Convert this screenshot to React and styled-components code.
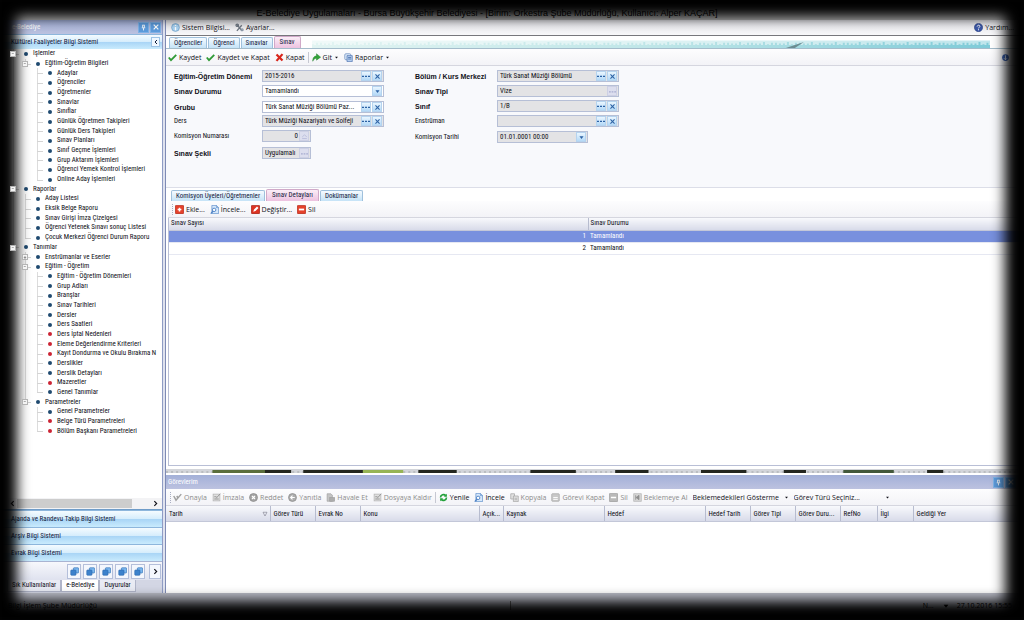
import React from "react"
import styled, { createGlobalStyle, css } from "styled-components"

const TREE = [
  { name: "İşlemler", items: [
    { name: "Eğitim-Öğretim Bilgileri", items: [
      "Adaylar", "Öğrenciler", "Öğretmenler", "Sınavlar", "Sınıflar",
      "Günlük Öğretmen Takipleri", "Günlük Ders Takipleri", "Sınav Planları",
      "Sınıf Geçme İşlemleri", "Grup Aktarım İşlemleri",
      "Öğrenci Yemek Kontrol İşlemleri", "Online Aday İşlemleri",
    ] },
  ] },
  { name: "Raporlar", items: [
    "Aday Listesi", "Eksik Belge Raporu", "Sınav Girişi İmza Çizelgesi",
    "Öğrenci Yetenek Sınavı sonuç Listesi", "Çocuk Merkezi Öğrenci Durum Raporu",
  ] },
  { name: "Tanımlar", items: [
    { name: "Enstrümanlar ve Eserler", closed: true },
    { name: "Eğitim - Öğretim", items: [
      "Eğitim - Öğretim Dönemleri", "Grup Adları", "Branşlar", "Sınav Tarihleri",
      "Dersler", "Ders Saatleri",
      { name: "Ders İptal Nedenleri", red: true },
      { name: "Eleme Değerlendirme Kriterleri", red: true },
      { name: "Kayıt Dondurma ve Okulu Bırakma N", red: true },
      "Derslikler", "Derslik Detayları",
      { name: "Mazeretler", red: true },
      "Genel Tanımlar",
    ] },
    { name: "Parametreler", items: [
      "Genel Parametreler",
      { name: "Belge Türü Parametreleri", red: true },
      { name: "Bölüm Başkanı Parametreleri", red: true },
    ] },
  ] },
]

// one flat list of rows, each knows which vertical rails run through it
function flatten(items, rails = []) {
  return items.flatMap((item, i) => {
    const node = typeof item === "string" ? { name: item } : item
    const last = i === items.length - 1
    return [
      { ...node, rails, last },
      ...flatten(node.items || [], [...rails, !last]),
    ]
  })
}

const TASK_COLUMNS = [
  ["Tarih", 104], ["Görev Türü", 45], ["Evrak No", 45], ["Konu", 119], ["Açık...", 24],
  ["Kaynak", 101], ["Hedef", 101], ["Hedef Tarih", 45], ["Görev Tipi", 45],
  ["Görev Duru...", 45], ["RefNo", 37], ["İlgi", 36], ["Geldiği Yer", null],
]

const icons = {
  check: <path d="M1 6 L4 9.5 L11 2.5" fill="none" stroke="#2f9a35" strokeWidth="2.4" />,
  cross: <path d="M2 2 L10 10 M10 1.5 L2 10.5" stroke="#d8261c" strokeWidth="3" />,
  go: <path d="M1 11 C1 6 3 4 6 4 V1 L11.5 5.5 L6 9.5 V7 C4 7 2.5 8 1 11Z" fill="#35a53a" stroke="#1f7a2a" strokeWidth=".6" />,
  report: <g><rect x="1" y="1" width="8" height="8" rx="1.5" fill="#dce9f8" stroke="#6f8fc0" /><path d="M4 3.5h7v8H4z" fill="#b4cdee" stroke="#5478b4" /><path d="M5.5 6h4M5.5 8h4" stroke="#4168a6" /></g>,
  info: <g><circle cx="6" cy="6" r="5.2" fill="#a9d3f2" stroke="#5f93bd" strokeWidth=".8" /><path d="M6 5.2V9.5M6 2.6v1.5" stroke="#fff" strokeWidth="1.8" /></g>,
  tools: <g fill="none" stroke="#6d7682" strokeWidth="1.7"><path d="M2.5 10.5L9 3M3 3l6.5 7.5" /><circle cx="3" cy="3" r="1.6" /><circle cx="9.5" cy="9" r="1.3" stroke="#8b98a8" /></g>,
  help: <g><circle cx="6" cy="6" r="5.5" fill="#3c58a8" stroke="#21377b" strokeWidth=".7" /><path d="M4.2 4.8C4.2 2.4 8 2.4 7.8 4.6C7.7 5.8 6 5.7 6 7.2M6 8.3v1.4" fill="none" stroke="#fff" strokeWidth="1.3" /></g>,
  plus: <g><rect x=".5" y=".5" width="11" height="11" rx="1" fill="#e5412b" stroke="#b32818" /><path d="M6 3.5v5M3.5 6h5" stroke="#fff" strokeWidth="2" /></g>,
  edit: <g><rect x=".5" y=".5" width="11" height="11" rx="1" fill="#dd3322" stroke="#a32216" /><path d="M3 9l1-3 4-4 2 2-4 4z" fill="#fff" /></g>,
  minus: <g><rect x=".5" y=".5" width="11" height="11" rx="1" fill="#e5412b" stroke="#b32818" /><path d="M2.5 6h7" stroke="#fff" strokeWidth="2.4" /></g>,
  view: <g><path d="M2.5 .5h6l3 3v8h-9z" fill="#d6e8fb" stroke="#6391cc" /><path d="M8.5 .5v3h3" fill="none" stroke="#6391cc" /><circle cx="5.5" cy="6.5" r="2.3" fill="#fff" stroke="#4a7fc4" strokeWidth="1.2" /><path d="M4 8.3L1 11.5" stroke="#4a7fc4" strokeWidth="1.6" /></g>,
  refresh: <g fill="none" stroke="#23a13a" strokeWidth="2.2"><path d="M2 6A4 4 0 0 1 9 3.5M10 6A4 4 0 0 1 3 8.5" /><path d="M10.5 1v4h-4zM1.5 11V7h4z" fill="#23a13a" stroke="none" /></g>,
  approve: <path d="M1 4L4 9.5L11 1.5M5 4l2 3" fill="none" stroke="#a0a0a0" strokeWidth="2" />,
  sign: <g><rect x="1.5" y="1.5" width="9" height="9" fill="#e0e0e0" stroke="#b4b4b4" /><path d="M3 5h3M3 8h6M5.5 7L11 1" stroke="#969696" strokeWidth="1.3" /></g>,
  reject: <g><circle cx="6" cy="6" r="5.3" fill="#a4a4a4" stroke="#8a8a8a" /><path d="M4 4l4 4M8 4L4 8" stroke="#fff" strokeWidth="1.5" /></g>,
  reply: <g><circle cx="6" cy="6" r="5.3" fill="#adadad" stroke="#8c8c8c" /><path d="M9 6H3.5M6 3.5L3.5 6L6 8.5" fill="none" stroke="#fff" strokeWidth="1.5" /></g>,
  forward: <g fill="#c4c4c4" stroke="#9b9b9b" strokeWidth=".8"><path d="M1.5 1h5l2 2v8h-7z" /><rect x="5" y="6" width="6.5" height="5" fill="#adadad" /></g>,
  copy: <g fill="#e2e2e2" stroke="#a6a6a6"><path d="M1 1h5v7H1z" /><path d="M4.5 4h6.5v7.5H4.5z" /><path d="M6 7h3.5M6 9h3.5" /></g>,
  close: <g><rect x="1" y="1" width="10" height="10" rx="1" fill="#c9c9c9" stroke="#a7a7a7" /><path d="M3 6h6M3 8.5h6" stroke="#fff" strokeWidth="1.2" /></g>,
  dash: <g><rect x=".5" y=".5" width="11" height="11" rx="1" fill="#b9b9b9" stroke="#9d9d9d" /><path d="M2.5 6h7" stroke="#fff" strokeWidth="2" /></g>,
  hold: <g><rect x="1" y="1" width="10" height="10" fill="#d6d6d6" stroke="#b5b5b5" /><path d="M8 3L4 6l4 3zM3.5 3v6" fill="#8e8e8e" stroke="#8e8e8e" /></g>,
  stack: <g stroke="#2969ae" strokeWidth=".8"><rect x="4.5" y="1" width="7" height="7" rx="1" fill="#79b6ee" /><rect x="1" y="4" width="7" height="7" rx="1" fill="#3c82cc" /></g>,
  pin: <path d="M4 2h4M4.5 2v4M7.5 2v4M3 6.5h6M6 7v4" stroke="currentColor" fill="none" strokeWidth="1.5" />,
  x: <path d="M2.5 2.5L9.5 9.5M9.5 2.5L2.5 9.5" stroke="currentColor" strokeWidth="1.8" />,
  dots: <path d="M0 6.5h3M4.5 6.5h3M9 6.5h3" stroke="currentColor" strokeWidth="2" />,
  down: <path d="M2.5 4h7L6 8.5z" fill="currentColor" />,
  up: <path d="M2 7L6 3l4 4M2 9.5h8" fill="none" stroke="currentColor" />,
  left: <path d="M8 2L4 6l4 4" fill="none" stroke="currentColor" strokeWidth="2" />,
  right: <path d="M4 2l4 4-4 4" fill="none" stroke="currentColor" strokeWidth="2" />,
  sort: <path d="M2 2.5h8L6 10z" fill="none" stroke="#667" />,
  move: <g><circle cx="6" cy="6" r="4.5" fill="#3d64b4" /><path d="M6 3v6M4 7l2 2 2-2" fill="none" stroke="#fff" /></g>,
}

const Icon = ({ name, size = 9 }) => (
  <IconSvg viewBox="0 0 12 12" width={size} height={size} aria-hidden="true">{icons[name]}</IconSvg>
)

const Tool = ({ icon, caret, children, ...rest }) => (
  <ToolButton type="button" {...rest}>
    {icon && <Icon name={icon} />}
    {children}
    {caret && <Icon name="down" size={5} />}
  </ToolButton>
)

const Tabs = ({ label, names, active }) => (
  <TabList role="tablist" aria-label={label}>
    {names.map((name) => (
      <Tab key={name} type="button" role="tab" aria-selected={name === active} $active={name === active}>
        {name}
      </Tab>
    ))}
  </TabList>
)

const Lookup = ({ id, label, value, strong, white }) => (
  <>
    <FieldLabel htmlFor={id} $strong={strong}>{label}</FieldLabel>
    <FieldBox $white={white}>
      <FieldInput id={id} defaultValue={value} readOnly={!white} />
      <MiniButton type="button" aria-label={`${label} seç`}><Icon name="dots" size={8} /></MiniButton>
      <MiniButton type="button" aria-label={`${label} temizle`}><Icon name="x" size={7} /></MiniButton>
    </FieldBox>
  </>
)

const Choice = ({ id, label, value, strong, white, short }) => (
  <>
    <FieldLabel htmlFor={id} $strong={strong}>{label}</FieldLabel>
    <FieldBox $white={white} $short={short}>
      <FieldSelect id={id} disabled={!white}><option>{value}</option></FieldSelect>
      <MiniMark $off={!white}><Icon name={white ? "down" : "dots"} size={7} /></MiniMark>
    </FieldBox>
  </>
)

const Sidebar = () => (
  <Side>
    <PanelTitle>
      <PanelName $indent>e-Belediye</PanelName>
      <PanelButton type="button" aria-label="Sabitle"><Icon name="pin" size={7} /></PanelButton>
      <PanelButton type="button" aria-label="Paneli kapat"><Icon name="x" size={8} /></PanelButton>
    </PanelTitle>
    <Section type="button" $open>
      Kültürel Faaliyetler Bilgi Sistemi
      <Collapse><Icon name="left" size={6} /></Collapse>
    </Section>
    <TreeArea>
      <Tree role="tree">
        {flatten(TREE).map((row) => (
          <TreeRow key={row.name} role="treeitem" aria-level={row.rails.length + 1}>
            {row.rails.map((on, i) => <Rail key={i} $kind={on ? "line" : "none"} />)}
            <Rail $kind={row.last ? "last" : "branch"}>
              {(row.items || row.closed) && <Expander>{row.closed ? "+" : "−"}</Expander>}
            </Rail>
            <BulletCell><Bullet $red={row.red} /></BulletCell>
            {row.name}
          </TreeRow>
        ))}
      </Tree>
      <HScroll>
        <Icon name="left" size={7} />
        <Thumb />
        <Icon name="right" size={7} />
      </HScroll>
    </TreeArea>
    <Section type="button">Ajanda ve Randevu Takip Bilgi Sistemi</Section>
    <Section type="button">Arşiv Bilgi Sistemi</Section>
    <Section type="button">Evrak Bilgi Sistemi</Section>
    <Shortcuts>
      {[1, 2, 3, 4, 5].map((n) => (
        <Shortcut key={n} type="button" aria-label={`Kısayol ${n}`}><Icon name="stack" size={9} /></Shortcut>
      ))}
      <Shortcut type="button" aria-label="Diğer" $narrow><Icon name="right" size={7} /></Shortcut>
    </Shortcuts>
    <SideTabs role="tablist">
      <SideTab type="button" role="tab">Sık Kullanılanlar</SideTab>
      <SideTab type="button" role="tab" $active>e-Belediye</SideTab>
      <SideTab type="button" role="tab">Duyurular</SideTab>
    </SideTabs>
  </Side>
)

// faint skyline behind the document tabs
const Skyline = () => {
  const bars = Array.from({ length: 170 }, (_, i) => ({ x: i * 4, h: 5 + ((i * 7) % 3) + ((i * 13) % 2) }))
  return (
    <SkylineSvg viewBox="0 0 680 12" preserveAspectRatio="none" aria-hidden="true">
      <defs>
        <linearGradient id="sea" x1="0" x2="680" gradientUnits="userSpaceOnUse">
          <stop offset="0" stopColor="#e2f4f2" />
          <stop offset=".5" stopColor="#bfe6e8" />
          <stop offset="1" stopColor="#7fcbd8" />
        </linearGradient>
      </defs>
      <rect y="2" width="680" height="10" fill="url(#sea)" opacity=".5" />
      {bars.map((b) => <rect key={b.x} x={b.x} y={12 - b.h} width="2" height={b.h} fill="url(#sea)" />)}
      <rect y="8" width="680" height="4" fill="url(#sea)" />
      <path d="M475 12L493 4L484 12z" fill="#6c8d92" />
    </SkylineSvg>
  )
}

const Landscape = () => (
  <LandscapeSvg viewBox="0 0 850 4" preserveAspectRatio="none" aria-hidden="true">
    <rect width="850" height="4" fill="#d3d5da" />
    <path d="M0 3H850" stroke="#a2a5a6" strokeDasharray="2 3" />
    <path d="M46 1h55v3H46z" fill="#5a6e3c" />
    <path d="M98 1h26v3H98zM136 1h60v3h-60zM250 1h38v3h-38zM361 1h45v3h-45zM445 1h33v3h-33zM530 1h45v3h-45zM612 1h22v3h-22zM754 1h16v3h-16z" fill="#23261f" />
    <path d="M195 1h40v3h-40z" fill="#96b455" />
    <path d="M671 1h50v3h-50z" fill="#42583a" />
  </LandscapeSvg>
)

const ExamForm = () => (
  <Form>
    <FormColumn $labels={88} $rows="15px 16px 14px 15px 17px 12px">
      <Lookup id="donem" label="Eğitim-Öğretim Dönemi" value="2015-2016" strong />
      <Choice id="durum" label="Sınav Durumu" value="Tamamlandı" strong white />
      <Lookup id="grup" label="Grubu" value="Türk Sanat Müziği Bölümü Paz..." strong white />
      <Lookup id="ders" label="Ders" value="Türk Müziği Nazariyatı ve Solfeji" />
      <FieldLabel htmlFor="numara">Komisyon Numarası</FieldLabel>
      <FieldBox $short>
        <FieldInput id="numara" defaultValue="0" readOnly $right />
        <MiniMark $off><Icon name="up" size={7} /></MiniMark>
      </FieldBox>
      <Choice id="sekil" label="Sınav Şekli" value="Uygulamalı" strong short />
    </FormColumn>
    <FormColumn $labels={82} $rows="15px 15px 15px 16px 12px">
      <Lookup id="bolum" label="Bölüm / Kurs Merkezi" value="Türk Sanat Müziği Bölümü" strong />
      <Choice id="tip" label="Sınav Tipi" value="Vize" strong />
      <Lookup id="sinif" label="Sınıf" value="1/B" strong />
      <Lookup id="enstruman" label="Enstrüman" value="" />
      <FieldLabel htmlFor="tarih">Komisyon Tarihi</FieldLabel>
      <FieldBox $date>
        <FieldInput id="tarih" defaultValue="01.01.0001 00:00" readOnly />
        <MiniButton type="button" aria-label="Takvim"><Icon name="down" size={7} /></MiniButton>
      </FieldBox>
    </FormColumn>
  </Form>
)

const App = () => (
  <Window>
    <GlobalStyle />
    <TitleBar>
      E-Belediye Uygulamaları - Bursa Büyükşehir Belediyesi - [Birim: Orkestra Şube Müdürlüğü, Kullanıcı: Alper KAÇAR]
    </TitleBar>
    <Body>
      <Sidebar />
      <Main>
        <MenuBar>
          <Tool icon="info">Sistem Bilgisi...</Tool>
          <Tool icon="tools">Ayarlar...</Tool>
          <Spacer />
          <Tool icon="help">Yardım...</Tool>
        </MenuBar>
        <DocTabs>
          <Tabs label="Belgeler" names={["Öğrenciler", "Öğrenci", "Sınavlar", "Sınav"]} active="Sınav" />
          <Skyline />
        </DocTabs>
        <Toolbar>
          <Tool icon="check">Kaydet</Tool>
          <Tool icon="check">Kaydet ve Kapat</Tool>
          <Tool icon="cross">Kapat</Tool>
          <Divider />
          <Tool icon="go" caret>Git</Tool>
          <Tool icon="report" caret>Raporlar</Tool>
          <Spacer />
          <Tool icon="move" aria-label="Taşı" />
        </Toolbar>
        <ExamForm />
        <Details>
          <Tabs label="Detaylar" names={["Komisyon Üyeleri/Öğretmenler", "Sınav Detayları", "Dokümanlar"]} active="Sınav Detayları" />
          <Toolbar $grip>
            <Tool icon="plus">Ekle...</Tool>
            <Tool icon="view">İncele...</Tool>
            <Tool icon="edit">Değiştir...</Tool>
            <Tool icon="minus">Sil</Tool>
          </Toolbar>
          <GridFrame>
            <Table>
              <colgroup><col width="419" /><col /></colgroup>
              <thead><tr><Th>Sınav Sayısı</Th><Th>Sınav Durumu</Th></tr></thead>
              <tbody>
                <Tr $selected><Td $right>1</Td><Td>Tamamlandı</Td></Tr>
                <Tr><Td $right>2</Td><Td>Tamamlandı</Td></Tr>
              </tbody>
            </Table>
          </GridFrame>
        </Details>
        <Landscape />
        <Tasks>
          <PanelTitle>
            <PanelName>Görevlerim</PanelName>
            <PanelButton type="button" aria-label="Sabitle"><Icon name="pin" size={7} /></PanelButton>
            <PanelButton type="button" aria-label="Kapat"><Icon name="x" size={8} /></PanelButton>
            <EdgeGap />
          </PanelTitle>
          <Toolbar $grip>
            <Tool icon="approve" disabled>Onayla</Tool>
            <Tool icon="sign" disabled>İmzala</Tool>
            <Tool icon="reject" disabled>Reddet</Tool>
            <Tool icon="reply" disabled>Yanıtla</Tool>
            <Tool icon="forward" disabled>Havale Et</Tool>
            <Tool icon="sign" disabled>Dosyaya Kaldır</Tool>
            <Divider />
            <Tool icon="refresh">Yenile</Tool>
            <Tool icon="view">İncele</Tool>
            <Tool icon="copy" disabled>Kopyala</Tool>
            <Tool icon="close" disabled>Görevi Kapat</Tool>
            <Tool icon="dash" disabled>Sil</Tool>
            <Tool icon="hold" disabled>Beklemeye Al</Tool>
            <Filter $width={96}>
              <FilterSelect aria-label="Bekleyenler"><option>Beklemedekileri Gösterme</option></FilterSelect>
              <Icon name="down" size={5} />
            </Filter>
            <Filter $width={96}>
              <FilterSelect aria-label="Görev türü"><option>Görev Türü Seçiniz...</option></FilterSelect>
              <Icon name="down" size={5} />
            </Filter>
          </Toolbar>
          <Table>
            <colgroup>
              {TASK_COLUMNS.map(([name, width]) => <col key={name} width={width || undefined} />)}
            </colgroup>
            <thead>
              <tr>
                {TASK_COLUMNS.map(([name], i) => (
                  <Th key={name} $tall>{i === 0 ? <Sorted>{name}<Icon name="sort" size={6} /></Sorted> : name}</Th>
                ))}
              </tr>
            </thead>
          </Table>
        </Tasks>
      </Main>
    </Body>
    <StatusBar>
      <StatusText>Bilgi İşlem Şube Müdürlüğü</StatusText>
      <StatusText $divided>
        <StatusBox>N...<Icon name="down" size={8} /></StatusBox>
        <span>27.10.2016 15:55</span>
      </StatusText>
    </StatusBar>
    <Vignette />
  </Window>
)

export default App

const GlobalStyle = createGlobalStyle`
  * {
    box-sizing: border-box;
  }
  body {
    margin: 0;
    background: #000;
    color: #101018;
    font-family: "Roboto Condensed", "Liberation Sans", Arial, sans-serif;
    font-size: 7px;
    line-height: 9px;
    overflow: hidden;
  }
  button, input, select {
    font: inherit;
    color: inherit;
    margin: 0;
    padding: 0;
    border: 0;
    background: none;
  }
`;

const Window = styled.div`
  display: flex;
  flex-direction: column;
  height: 100vh;
  background: #dfe2ee;
`;

const Vignette = styled.div`
  position: fixed;
  inset: 0;
  pointer-events: none;
  box-shadow: inset -1px -1px 13px 18px #000;
`;

const TitleBar = styled.header`
  flex: none;
  height: 20px;
  padding: 7px 50px 0 0;
  text-align: center;
  font-family: "Liberation Sans", Arial, sans-serif;
  font-size: 9px;
  line-height: 12px;
  color: #000;
  background: #b5b5b5;
`;

const Body = styled.div`
  flex: 1;
  display: flex;
  min-height: 0;
`;

const IconSvg = styled.svg`
  flex: none;
  display: block;
`;

const Spacer = styled.div`
  flex: 1;
`;

const Side = styled.aside`
  flex: none;
  width: 163px;
  display: flex;
  flex-direction: column;
  background: #fff;
  border-right: 1px solid #8f9cc4;
`;

const PanelTitle = styled.div`
  flex: none;
  display: flex;
  align-items: center;
  gap: 1px;
  height: 14px;
  padding-right: 1px;
  color: #fff;
  background: linear-gradient(#a3b0d8, #bcc2e0);
`;

const PanelName = styled.span`
  flex: 1;
  padding-left: ${(props) => (props.$indent ? "12px" : "2px")};
`;

const EdgeGap = styled.span`
  width: 6px;
`;

const PanelButton = styled.button`
  display: grid;
  place-items: center;
  width: 11px;
  height: 11px;
  color: #fff;
  background: #5c9bdc;
  border: 1px solid #7fb2e6;
`;

const Section = styled.button`
  flex: none;
  display: flex;
  align-items: center;
  height: ${(props) => (props.$open ? "15px" : "17px")};
  padding-left: 11px;
  color: #12203c;
  white-space: nowrap;
  border-top: 1px solid #8db6dc;
  background: linear-gradient(#f4fbff 0%, #d6edfc 48%, #a9d5f6 52%, #c9ebfd 100%);
`;

const Collapse = styled.span`
  display: grid;
  place-items: center;
  width: 9px;
  height: 10px;
  margin-left: auto;
  margin-right: 2px;
  background: #eef7ff;
  border: 1px solid #9cc3e6;
`;

const TreeArea = styled.div`
  flex: 1;
  display: flex;
  flex-direction: column;
  justify-content: space-between;
  min-height: 0;
  border-bottom: 1px solid #6f9cc8;
`;

const Tree = styled.ul`
  display: grid;
  grid-auto-rows: 1fr;
  height: 387px;
  margin: 0;
  padding: 0 0 0 7px;
  list-style: none;
  overflow: hidden;
`;

const TreeRow = styled.li`
  display: flex;
  align-items: center;
  min-height: 0;
  white-space: nowrap;
`;

const Rail = styled.span`
  position: relative;
  flex: none;
  align-self: stretch;
  width: 12px;
  ${(props) => props.$kind !== "none" && css`
    &::before {
      content: "";
      position: absolute;
      left: 6px;
      top: 0;
      bottom: ${props.$kind === "last" ? "50%" : "0"};
      border-left: 1px solid #dcdcdc;
    }
  `}
  ${(props) => (props.$kind === "last" || props.$kind === "branch") && css`
    &::after {
      content: "";
      position: absolute;
      left: 6px;
      right: 0;
      top: 50%;
      border-top: 1px solid #d4d4d4;
    }
  `}
`;

const Expander = styled.span`
  position: absolute;
  z-index: 1;
  left: 3px;
  top: 2px;
  width: 6px;
  height: 6px;
  font-size: 6px;
  line-height: 4px;
  text-align: center;
  color: #555;
  background: #f4f4f4;
  border: 1px solid #b4b4b4;
`;

const BulletCell = styled.span`
  flex: none;
  display: grid;
  place-items: center;
  width: 14px;
`;

const Bullet = styled.i`
  width: 4px;
  height: 4px;
  border-radius: 2px;
  background: ${(props) => (props.$red ? "#cc2434" : "#1f4a70")};
`;

const HScroll = styled.div`
  display: flex;
  align-items: center;
  gap: 1px;
  height: 11px;
  padding: 0 3px 0 9px;
  background: #f3f3f5;
`;

const Thumb = styled.div`
  width: 115px;
  height: 9px;
  margin-right: auto;
  background: #cdcdcd;
`;

const Shortcuts = styled.div`
  flex: none;
  display: flex;
  align-items: center;
  justify-content: flex-end;
  gap: 2px;
  height: 19px;
  padding-right: 1px;
  background: linear-gradient(#f7f8fc, #dfe2ef);
  border-top: 1px solid #a9b4d2;
`;

const Shortcut = styled.button`
  display: grid;
  place-items: center;
  width: ${(props) => (props.$narrow ? "12px" : "14px")};
  height: 15px;
  margin-left: ${(props) => (props.$narrow ? "2px" : "0")};
  background: #f4f7fd;
  border: 1px solid #b4bfda;
`;

const SideTabs = styled.div`
  flex: none;
  display: flex;
  align-items: flex-start;
  height: 13px;
  padding-left: 7px;
  background: #d3d6e4;
`;

const SideTab = styled.button`
  height: 12px;
  padding: 0 4px;
  white-space: nowrap;
  background: ${(props) => (props.$active ? "#fff" : "#e9ebf4")};
  border: 1px solid #b0b5c9;
  border-top: 0;
`;

const Main = styled.main`
  flex: 1;
  min-width: 0;
  display: flex;
  flex-direction: column;
  margin-left: 2px;
  border-left: 1px solid #7f8bb5;
  background: #fff;
`;

const MenuBar = styled.nav`
  flex: none;
  display: flex;
  align-items: center;
  gap: 5px;
  height: 16px;
  padding: 1px 10px 2px 5px;
  background: linear-gradient(#e4e4e8, #f8f8fa);
  border-bottom: 1px solid #77777c;
`;

const Toolbar = styled.div`
  flex: none;
  display: flex;
  align-items: center;
  gap: 5px;
  height: 17px;
  padding: 0 14px 0 ${(props) => (props.$grip ? "4px" : "2px")};
  background: linear-gradient(#fdfdfe, #f3f3f7);
  border-bottom: 1px solid #d5d6df;
  ${(props) => props.$grip && css`
    &::before {
      content: "";
      height: 11px;
      margin-right: -3px;
      border-left: 1px dotted #a9aec2;
    }
  `}
`;

const ToolButton = styled.button`
  flex: none;
  display: flex;
  align-items: center;
  gap: 2px;
  font-family: "Open Sans", sans-serif;
  white-space: nowrap;

  &:disabled {
    color: #8c8c8c;
  }
`;

const Divider = styled.span`
  height: 11px;
  margin: 0 -2px;
  border-left: 1px solid #c6c8d2;
`;

const DocTabs = styled.div`
  flex: none;
  display: flex;
  align-items: flex-end;
  height: 13px;
  border-bottom: 1px solid #a4bccb;
`;

const SkylineSvg = styled.svg`
  flex: 1;
  min-width: 0;
  height: 9px;
  margin: 0 34px 0 11px;
`;

const TabList = styled.div`
  flex: none;
  display: flex;
  align-items: flex-end;
  gap: 1px;
  height: 12px;
  padding-left: 3px;
`;

const Tab = styled.button`
  height: 11px;
  padding: 0 4px;
  white-space: nowrap;
  color: #14203c;
  border: 1px solid #9fc0dc;
  border-bottom: 0;
  border-radius: 2px 2px 0 0;
  background: linear-gradient(#f6fbff, #c5e3f7);
  ${(props) => props.$active && css`
    height: 12px;
    padding: 0 5px;
    border-color: #d0a9c8;
    background: linear-gradient(#fbeef7, #edc2e0);
  `}
`;

const Form = styled.form`
  flex: none;
  display: flex;
  gap: 31px;
  height: 122px;
  padding: 4px 8px;
  background: #f8f9fc;
  border-bottom: 1px solid #dcdee8;
`;

const FormColumn = styled.div`
  display: grid;
  grid-template-columns: ${(props) => props.$labels}px 122px;
  grid-template-rows: ${(props) => props.$rows};
  align-content: start;
`;

const FieldLabel = styled.label`
  padding-top: 2px;
  white-space: nowrap;
  ${(props) => props.$strong && css`
    font-family: "Liberation Sans", Arial, sans-serif;
    font-weight: bold;
  `}
`;

const FieldBox = styled.div`
  display: flex;
  align-items: center;
  gap: 1px;
  width: ${(props) => (props.$short ? "49px" : props.$date ? "91px" : "122px")};
  height: 12px;
  padding: 0 1px 0 2px;
  background: ${(props) => (props.$white ? "#fff" : "#e3e3e5")};
  border: 1px solid #b6bfd6;
`;

const FieldInput = styled.input`
  flex: 1;
  min-width: 0;
  height: 10px;
  outline: none;
  text-align: ${(props) => (props.$right ? "right" : "left")};
`;

const FieldSelect = styled.select`
  flex: 1;
  min-width: 0;
  height: 10px;
  appearance: none;
  outline: none;

  &:disabled {
    opacity: 1;
  }
`;

const miniFace = css`
  flex: none;
  display: grid;
  place-items: center;
  width: 10px;
  height: 10px;
  color: #2c62a4;
  background: linear-gradient(#eaf6ff, #b4d9f7);
  border: 1px solid #b5d3ee;
`;

const MiniButton = styled.button`
  ${miniFace}
`;

const MiniMark = styled.span`
  ${miniFace}
  ${(props) => props.$off && css`
    color: #a7acd0;
    background: #dcdeee;
    border-color: #cdd0e4;
  `}
`;

const Details = styled.section`
  flex: 1;
  min-height: 0;
  display: flex;
  flex-direction: column;
  padding: 1px 0 3px 2px;
`;

const GridFrame = styled.div`
  flex: 1;
  border: 1px solid #b9bfd6;
  border-top: 0;
  border-right: 0;
`;

const Table = styled.table`
  width: 100%;
  table-layout: fixed;
  border-collapse: collapse;
`;

const Th = styled.th`
  height: ${(props) => (props.$tall ? "15px" : "12px")};
  padding: ${(props) => (props.$tall ? "2px 0 0 3px" : "0 2px")};
  overflow: hidden;
  white-space: nowrap;
  text-align: left;
  font-weight: normal;
  background: linear-gradient(#f8f9fc, #d8dbe9);
  border-right: 1px solid #b7bccf;
  border-bottom: 1px solid #c3c7d8;
`;

const Sorted = styled.span`
  display: flex;
  align-items: center;
  justify-content: space-between;
  padding-right: 2px;
`;

const Tr = styled.tr`
  color: ${(props) => (props.$selected ? "#fff" : "inherit")};
  background: ${(props) => (props.$selected ? "#7890de" : "#fff")};
`;

const Td = styled.td`
  height: 12px;
  padding: 0 2px;
  text-align: ${(props) => (props.$right ? "right" : "left")};
  border-bottom: 1px solid #e6e8f2;
`;

const LandscapeSvg = styled.svg`
  flex: none;
  width: 100%;
  height: 4px;
  margin-bottom: 2px;
`;

const Tasks = styled.section`
  flex: none;
  height: 118px;
  display: flex;
  flex-direction: column;
`;

const Filter = styled.span`
  flex: none;
  display: flex;
  align-items: center;
  width: ${(props) => props.$width}px;
`;

const FilterSelect = styled.select`
  flex: 1;
  min-width: 0;
  appearance: none;
  font-family: "Open Sans", sans-serif;
`;

const StatusBar = styled.footer`
  flex: none;
  display: flex;
  align-items: center;
  height: 27px;
  padding: 0 12px 2px 8px;
  font-family: "Open Sans", sans-serif;
  color: #000;
  background: #b9bbc6;
`;

const StatusText = styled.span`
  flex: 1;
  ${(props) => props.$divided && css`
    display: flex;
    justify-content: flex-end;
    gap: 7px;
    border-left: 1px solid #666;
  `}
`;

const StatusBox = styled.span`
  display: flex;
  align-items: center;
  gap: 8px;
`;
